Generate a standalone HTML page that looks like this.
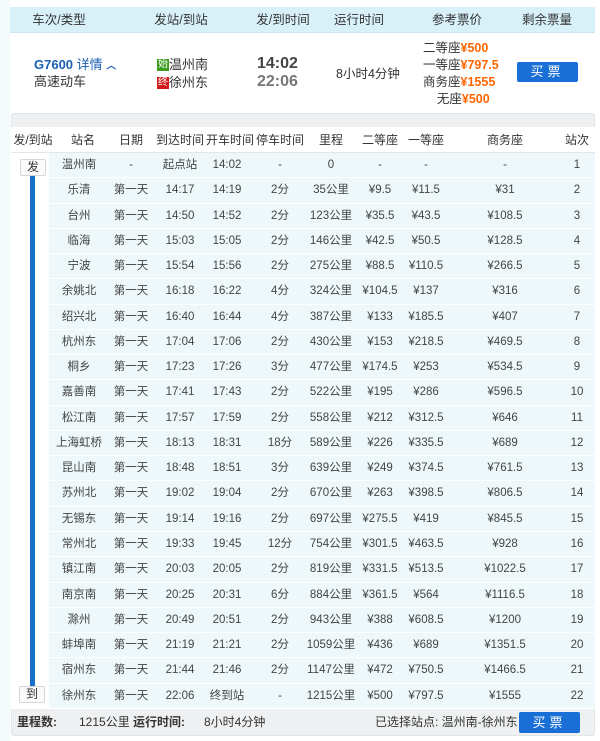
<!DOCTYPE html>
<html><head><meta charset="utf-8"><style>
*{margin:0;padding:0;box-sizing:border-box}
body{width:600px;height:741px;background:#fff;font-family:"Liberation Sans","Noto Sans CJK SC",sans-serif;font-size:12px;line-height:16px;color:#333;position:relative;overflow:hidden}
span{white-space:nowrap}
.a{position:absolute;white-space:nowrap}
.hdr{position:absolute;left:10px;top:7px;width:585px;height:26px;background:#d8f1f8;border-bottom:1px solid #c8e6ee}
.hdr span{position:absolute;top:0;line-height:26px;transform:translateX(-50%);font-size:12.5px;color:#333}
.org{color:#f60;font-weight:bold}
.btn{position:absolute;background:#1a6fd6;color:#fff;text-align:center;border-radius:2px;font-size:13px;letter-spacing:4px}
.panel{position:absolute;left:11px;top:113px;width:584px;height:623px;background:#eef0f2;border:1px solid #e2e5e8;border-radius:3px}
.sh{position:absolute;left:11px;top:127px;width:584px;height:26px;background:#fff;border-bottom:1px solid #e6e6e6}
.sh span{position:absolute;top:0;line-height:26px;transform:translateX(-50%);font-size:12px}
.rows{position:absolute;left:11px;top:153px;width:584px}
.r{position:relative;height:25.27px;background:#fff}
.r .bg{position:absolute;left:38px;right:0;top:0;bottom:1px;background:#eef8fa}
.r span{position:absolute;top:0;line-height:25px;height:25px;transform:translateX(-50%);font-size:11.5px;color:#444}
.tab{position:absolute;width:26px;height:17px;background:#fafafa;border:1px solid #d6d6d6;font-size:12px;text-align:center;line-height:15px;border-radius:2px}
</style></head><body>
<div class="a" style="left:0;top:0;width:10px;height:741px;background:#f3fafc"></div>
<div class="hdr"><span style="left:49px">车次/类型</span><span style="left:171px">发站/到站</span><span style="left:273px">发/到时间</span><span style="left:349px">运行时间</span><span style="left:447px">参考票价</span><span style="left:537px">剩余票量</span></div>

<div class="a" style="left:34px;top:57px;font-size:13px;font-weight:bold;color:#1a5fb4">G7600 <span style="font-weight:normal">详情</span> <span style="font-size:10px">︿</span></div>
<div class="a" style="left:34px;top:74px;font-size:13px">高速动车</div>
<div class="a" style="left:157px;top:59px;width:12px;height:12px;background:#3a9c1c;color:#fff;font-size:10px;line-height:12px;text-align:center">始</div>
<div class="a" style="left:169px;top:57px;font-size:13px">温州南</div>
<div class="a" style="left:157px;top:77px;width:12px;height:12px;background:#d21a1a;color:#fff;font-size:10px;line-height:12px;text-align:center">终</div>
<div class="a" style="left:169px;top:75px;font-size:13px">徐州东</div>
<div class="a" style="left:257px;top:56px;font-size:16px;font-weight:bold;color:#444">14:02</div>
<div class="a" style="left:257px;top:74px;font-size:16px;font-weight:bold;color:#777">22:06</div>
<div class="a" style="left:336px;top:66px;font-size:12.5px">8小时4分钟</div>
<div class="a" style="left:423px;top:40px;font-size:12.5px;line-height:17px">二等座<span class="org">¥500</span><br>一等座<span class="org">¥797.5</span><br>商务座<span class="org">¥1555</span><br>&nbsp;&nbsp;&nbsp;&nbsp;无座<span class="org">¥500</span></div>
<div class="btn" style="left:517px;top:62px;width:61px;height:20px;line-height:20px">买票</div>

<div class="panel"></div>
<div class="sh"><span style="left:22px">发/到站</span><span style="left:72px">站名</span><span style="left:120px">日期</span><span style="left:169px">到达时间</span><span style="left:219px">开车时间</span><span style="left:269px">停车时间</span><span style="left:320px">里程</span><span style="left:369px">二等座</span><span style="left:415px">一等座</span><span style="left:494px">商务座</span><span style="left:566px">站次</span></div>

<div class="rows">
<div class="r"><div class="bg"></div><span style="left:68px">温州南</span><span style="left:120px">-</span><span style="left:169px">起点站</span><span style="left:216px">14:02</span><span style="left:269px">-</span><span style="left:320px">0</span><span style="left:369px">-</span><span style="left:415px">-</span><span style="left:494px">-</span><span style="left:566px">1</span></div>
<div class="r"><div class="bg"></div><span style="left:68px">乐清</span><span style="left:120px">第一天</span><span style="left:169px">14:17</span><span style="left:216px">14:19</span><span style="left:269px">2分</span><span style="left:320px">35公里</span><span style="left:369px">¥9.5</span><span style="left:415px">¥11.5</span><span style="left:494px">¥31</span><span style="left:566px">2</span></div>
<div class="r"><div class="bg"></div><span style="left:68px">台州</span><span style="left:120px">第一天</span><span style="left:169px">14:50</span><span style="left:216px">14:52</span><span style="left:269px">2分</span><span style="left:320px">123公里</span><span style="left:369px">¥35.5</span><span style="left:415px">¥43.5</span><span style="left:494px">¥108.5</span><span style="left:566px">3</span></div>
<div class="r"><div class="bg"></div><span style="left:68px">临海</span><span style="left:120px">第一天</span><span style="left:169px">15:03</span><span style="left:216px">15:05</span><span style="left:269px">2分</span><span style="left:320px">146公里</span><span style="left:369px">¥42.5</span><span style="left:415px">¥50.5</span><span style="left:494px">¥128.5</span><span style="left:566px">4</span></div>
<div class="r"><div class="bg"></div><span style="left:68px">宁波</span><span style="left:120px">第一天</span><span style="left:169px">15:54</span><span style="left:216px">15:56</span><span style="left:269px">2分</span><span style="left:320px">275公里</span><span style="left:369px">¥88.5</span><span style="left:415px">¥110.5</span><span style="left:494px">¥266.5</span><span style="left:566px">5</span></div>
<div class="r"><div class="bg"></div><span style="left:68px">余姚北</span><span style="left:120px">第一天</span><span style="left:169px">16:18</span><span style="left:216px">16:22</span><span style="left:269px">4分</span><span style="left:320px">324公里</span><span style="left:369px">¥104.5</span><span style="left:415px">¥137</span><span style="left:494px">¥316</span><span style="left:566px">6</span></div>
<div class="r"><div class="bg"></div><span style="left:68px">绍兴北</span><span style="left:120px">第一天</span><span style="left:169px">16:40</span><span style="left:216px">16:44</span><span style="left:269px">4分</span><span style="left:320px">387公里</span><span style="left:369px">¥133</span><span style="left:415px">¥185.5</span><span style="left:494px">¥407</span><span style="left:566px">7</span></div>
<div class="r"><div class="bg"></div><span style="left:68px">杭州东</span><span style="left:120px">第一天</span><span style="left:169px">17:04</span><span style="left:216px">17:06</span><span style="left:269px">2分</span><span style="left:320px">430公里</span><span style="left:369px">¥153</span><span style="left:415px">¥218.5</span><span style="left:494px">¥469.5</span><span style="left:566px">8</span></div>
<div class="r"><div class="bg"></div><span style="left:68px">桐乡</span><span style="left:120px">第一天</span><span style="left:169px">17:23</span><span style="left:216px">17:26</span><span style="left:269px">3分</span><span style="left:320px">477公里</span><span style="left:369px">¥174.5</span><span style="left:415px">¥253</span><span style="left:494px">¥534.5</span><span style="left:566px">9</span></div>
<div class="r"><div class="bg"></div><span style="left:68px">嘉善南</span><span style="left:120px">第一天</span><span style="left:169px">17:41</span><span style="left:216px">17:43</span><span style="left:269px">2分</span><span style="left:320px">522公里</span><span style="left:369px">¥195</span><span style="left:415px">¥286</span><span style="left:494px">¥596.5</span><span style="left:566px">10</span></div>
<div class="r"><div class="bg"></div><span style="left:68px">松江南</span><span style="left:120px">第一天</span><span style="left:169px">17:57</span><span style="left:216px">17:59</span><span style="left:269px">2分</span><span style="left:320px">558公里</span><span style="left:369px">¥212</span><span style="left:415px">¥312.5</span><span style="left:494px">¥646</span><span style="left:566px">11</span></div>
<div class="r"><div class="bg"></div><span style="left:68px">上海虹桥</span><span style="left:120px">第一天</span><span style="left:169px">18:13</span><span style="left:216px">18:31</span><span style="left:269px">18分</span><span style="left:320px">589公里</span><span style="left:369px">¥226</span><span style="left:415px">¥335.5</span><span style="left:494px">¥689</span><span style="left:566px">12</span></div>
<div class="r"><div class="bg"></div><span style="left:68px">昆山南</span><span style="left:120px">第一天</span><span style="left:169px">18:48</span><span style="left:216px">18:51</span><span style="left:269px">3分</span><span style="left:320px">639公里</span><span style="left:369px">¥249</span><span style="left:415px">¥374.5</span><span style="left:494px">¥761.5</span><span style="left:566px">13</span></div>
<div class="r"><div class="bg"></div><span style="left:68px">苏州北</span><span style="left:120px">第一天</span><span style="left:169px">19:02</span><span style="left:216px">19:04</span><span style="left:269px">2分</span><span style="left:320px">670公里</span><span style="left:369px">¥263</span><span style="left:415px">¥398.5</span><span style="left:494px">¥806.5</span><span style="left:566px">14</span></div>
<div class="r"><div class="bg"></div><span style="left:68px">无锡东</span><span style="left:120px">第一天</span><span style="left:169px">19:14</span><span style="left:216px">19:16</span><span style="left:269px">2分</span><span style="left:320px">697公里</span><span style="left:369px">¥275.5</span><span style="left:415px">¥419</span><span style="left:494px">¥845.5</span><span style="left:566px">15</span></div>
<div class="r"><div class="bg"></div><span style="left:68px">常州北</span><span style="left:120px">第一天</span><span style="left:169px">19:33</span><span style="left:216px">19:45</span><span style="left:269px">12分</span><span style="left:320px">754公里</span><span style="left:369px">¥301.5</span><span style="left:415px">¥463.5</span><span style="left:494px">¥928</span><span style="left:566px">16</span></div>
<div class="r"><div class="bg"></div><span style="left:68px">镇江南</span><span style="left:120px">第一天</span><span style="left:169px">20:03</span><span style="left:216px">20:05</span><span style="left:269px">2分</span><span style="left:320px">819公里</span><span style="left:369px">¥331.5</span><span style="left:415px">¥513.5</span><span style="left:494px">¥1022.5</span><span style="left:566px">17</span></div>
<div class="r"><div class="bg"></div><span style="left:68px">南京南</span><span style="left:120px">第一天</span><span style="left:169px">20:25</span><span style="left:216px">20:31</span><span style="left:269px">6分</span><span style="left:320px">884公里</span><span style="left:369px">¥361.5</span><span style="left:415px">¥564</span><span style="left:494px">¥1116.5</span><span style="left:566px">18</span></div>
<div class="r"><div class="bg"></div><span style="left:68px">滁州</span><span style="left:120px">第一天</span><span style="left:169px">20:49</span><span style="left:216px">20:51</span><span style="left:269px">2分</span><span style="left:320px">943公里</span><span style="left:369px">¥388</span><span style="left:415px">¥608.5</span><span style="left:494px">¥1200</span><span style="left:566px">19</span></div>
<div class="r"><div class="bg"></div><span style="left:68px">蚌埠南</span><span style="left:120px">第一天</span><span style="left:169px">21:19</span><span style="left:216px">21:21</span><span style="left:269px">2分</span><span style="left:320px">1059公里</span><span style="left:369px">¥436</span><span style="left:415px">¥689</span><span style="left:494px">¥1351.5</span><span style="left:566px">20</span></div>
<div class="r"><div class="bg"></div><span style="left:68px">宿州东</span><span style="left:120px">第一天</span><span style="left:169px">21:44</span><span style="left:216px">21:46</span><span style="left:269px">2分</span><span style="left:320px">1147公里</span><span style="left:369px">¥472</span><span style="left:415px">¥750.5</span><span style="left:494px">¥1466.5</span><span style="left:566px">21</span></div>
<div class="r"><div class="bg"></div><span style="left:68px">徐州东</span><span style="left:120px">第一天</span><span style="left:169px">22:06</span><span style="left:216px">终到站</span><span style="left:269px">-</span><span style="left:320px">1215公里</span><span style="left:369px">¥500</span><span style="left:415px">¥797.5</span><span style="left:494px">¥1555</span><span style="left:566px">22</span></div>
</div>
<div class="a" style="left:30px;top:176px;width:5px;height:510px;background:#1570c8"></div>
<div class="tab" style="left:20px;top:159px">发</div>
<div class="tab" style="left:19px;top:686px">到</div>

<div class="a" style="left:17px;top:714px;font-weight:bold;font-size:12px">里程数:</div>
<div class="a" style="left:79px;top:714px;font-size:12px">1215公里 <b>运行时间:</b></div>
<div class="a" style="left:204px;top:714px;font-size:12px">8小时4分钟</div>
<div class="a" style="left:375px;top:714px;font-size:12px">已选择站点: 温州南-徐州东</div>
<div class="btn" style="left:519px;top:712px;width:61px;height:21px;line-height:21px">买票</div>
</body></html>
